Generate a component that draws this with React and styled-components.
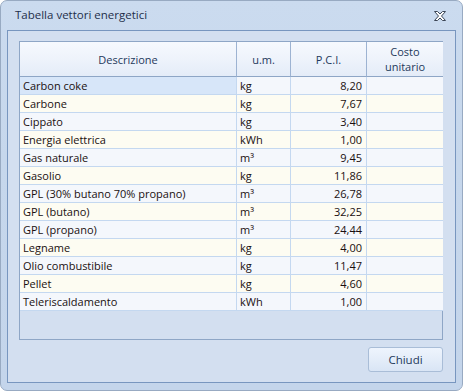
import React from 'react';
import styled, { createGlobalStyle } from 'styled-components';

const GlobalStyle = createGlobalStyle`
  html, body {
    margin: 0;
    padding: 0;
    background: #ffffff;
  }
  body {
    font-family: "Open Sans", "Noto Sans", "DejaVu Sans", sans-serif;
    font-size: 11px;
  }
`;

const Window = styled.div`
  width: 463px;
  height: 391px;
  box-sizing: border-box;
  border: 1px solid #98aac2;
  border-radius: 7px;
  background: linear-gradient(180deg, #cbdbef 0%, #c6d7ec 40%, #c4d5eb 100%);
  display: flex;
  flex-direction: column;
  overflow: hidden;
`;

const TitleBar = styled.div`
  height: 29px;
  display: flex;
  align-items: center;
  justify-content: space-between;
  padding: 0 14px 0 14px;
  box-sizing: border-box;
`;

const Title = styled.span`
  font-size: 11.5px;
  color: #1e2f4a;
  padding-bottom: 2px;
`;

const CloseButton = styled.button`
  width: 16px;
  height: 16px;
  padding: 0;
  border: none;
  background: none;
  display: flex;
  align-items: center;
  justify-content: center;
  cursor: pointer;
`;

const Panel = styled.div`
  flex: 1;
  margin: 0 6px 7px 6px;
  border: 1px solid #7896bf;
  background: #d3dff0;
  padding: 10px 12px 10px 11px;
  display: flex;
  flex-direction: column;
  gap: 7px;
`;

const Grid = styled.div`
  height: 299px;
  box-sizing: border-box;
  border: 1px solid #8ea6c6;
  background: #d3dff0;
  display: flex;
  flex-direction: column;
`;

const Row = styled.div`
  display: grid;
  grid-template-columns: 217px 54px 76px 76px;
`;

const HeadCell = styled.div`
  height: 34px;
  border-right: 1px solid #9db3d2;
  border-bottom: 1px solid #8ea6c6;
  background: linear-gradient(180deg, #f6f9fe 0%, #eef3fb 50%, #e4ecf8 100%);
  color: #1e395b;
  display: flex;
  align-items: center;
  justify-content: center;
  text-align: center;
  line-height: 15px;
  &:last-child {
    border-right: none;
  }
`;

const Cell = styled.div`
  height: 17px;
  line-height: 17px;
  padding: 0 4px 0 3px;
  border-right: 1px solid #c4d8f0;
  border-bottom: 1px solid #c4d8f0;
  background: ${p => (p.$active ? '#d7e6f9' : p.$odd ? '#fdfcf2' : '#f4f7fc')};
  color: #1a1010;
  text-align: ${p => (p.$right ? 'right' : 'left')};
  white-space: nowrap;
  overflow: hidden;
  &:last-child {
    border-right: none;
  }
`;

const Footer = styled.div`
  display: flex;
  justify-content: flex-end;
`;

const Button = styled.button`
  width: 75px;
  height: 25px;
  border: 1px solid #a9bdd7;
  border-radius: 3px;
  background: linear-gradient(180deg, #eef4fd 0%, #e4edf9 50%, #d9e5f5 100%);
  color: #1e395b;
  font-family: inherit;
  font-size: 11.5px;
  padding: 0;
  cursor: pointer;
`;

const rows = [
  ['Carbon coke', 'kg', '8,20'],
  ['Carbone', 'kg', '7,67'],
  ['Cippato', 'kg', '3,40'],
  ['Energia elettrica', 'kWh', '1,00'],
  ['Gas naturale', 'm³', '9,45'],
  ['Gasolio', 'kg', '11,86'],
  ['GPL (30% butano 70% propano)', 'm³', '26,78'],
  ['GPL (butano)', 'm³', '32,25'],
  ['GPL (propano)', 'm³', '24,44'],
  ['Legname', 'kg', '4,00'],
  ['Olio combustibile', 'kg', '11,47'],
  ['Pellet', 'kg', '4,60'],
  ['Teleriscaldamento', 'kWh', '1,00'],
];

const CloseIcon = () => (
  <svg width="14" height="12" viewBox="0 0 14 12">
    <path
      d="M1.5 1.5 H4.5 L7 4 L9.5 1.5 H12.5 L8.5 6 L12.5 10.5 H9.5 L7 8 L4.5 10.5 H1.5 L5.5 6 Z"
      fill="#ffffff"
      stroke="#3c4656"
      strokeWidth="1"
      strokeLinejoin="round"
    />
  </svg>
);

export default function App() {
  return (
    <>
      <GlobalStyle />
      <Window>
        <TitleBar>
          <Title>Tabella vettori energetici</Title>
          <CloseButton type="button">
            <CloseIcon />
          </CloseButton>
        </TitleBar>
        <Panel>
          <Grid>
            <Row>
              <HeadCell>Descrizione</HeadCell>
              <HeadCell>u.m.</HeadCell>
              <HeadCell>P.C.I.</HeadCell>
              <HeadCell>Costo<br />unitario</HeadCell>
            </Row>
            {rows.map(([name, unit, pci], i) => (
              <Row key={name}>
                <Cell $odd={i % 2 === 1} $active={i === 0}>{name}</Cell>
                <Cell $odd={i % 2 === 1}>{unit}</Cell>
                <Cell $odd={i % 2 === 1} $right>{pci}</Cell>
                <Cell $odd={i % 2 === 1}></Cell>
              </Row>
            ))}
          </Grid>
          <Footer>
            <Button type="button">Chiudi</Button>
          </Footer>
        </Panel>
      </Window>
    </>
  );
}
